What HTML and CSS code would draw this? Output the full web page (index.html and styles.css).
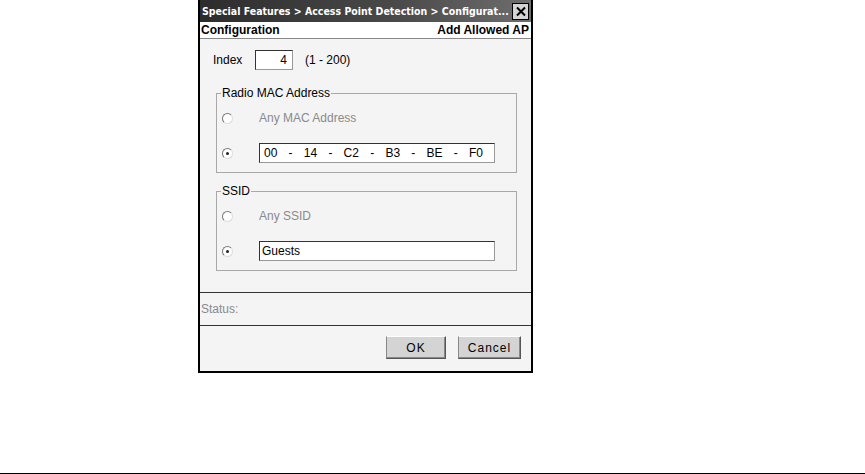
FILE: index.html
```html
<!DOCTYPE html>
<html lang="en">
<head>
  <meta charset="UTF-8" />
  <title>Add Allowed AP</title>
  <link rel="stylesheet" href="styles.css">
</head>
<body>

  <div class="dialog">
    <div class="title-bar">
      <span class="title-text">Special Features &gt; Access Point Detection &gt; Configurat...</span>
      <span class="close-btn">
        <svg width="12" height="11" viewBox="0 0 12 11"><path d="M2 1.5 L10 9.5 M10 1.5 L2 9.5" stroke="#000" stroke-width="2"/></svg>
      </span>
    </div>

    <div class="header-bar">
      <span>Configuration</span>
      <span>Add Allowed AP</span>
    </div>

    <div class="content">
      <div class="index-row">
        <label for="indexInput">Index</label>
        <div class="field small-field">4</div>
        <span>(1 - 200)</span>
      </div>

      <fieldset class="group mac-group">
        <legend>Radio MAC Address</legend>
        <div class="option-row">
          <span class="radio"></span>
          <span class="disabled-text">Any MAC Address</span>
        </div>
        <div class="option-row">
          <span class="radio checked"></span>
          <div class="field wide-field mac-field">
            <span>00</span><span>-</span><span>14</span><span>-</span><span>C2</span><span>-</span><span>B3</span><span>-</span><span>BE</span><span>-</span><span>F0</span>
          </div>
        </div>
      </fieldset>

      <fieldset class="group ssid-group">
        <legend>SSID</legend>
        <div class="option-row">
          <span class="radio"></span>
          <span class="disabled-text">Any SSID</span>
        </div>
        <div class="option-row">
          <span class="radio checked"></span>
          <div class="field wide-field">Guests</div>
        </div>
      </fieldset>
    </div>

    <div class="status-row">Status:</div>

    <div class="button-row">
      <button>OK</button>
      <button>Cancel</button>
    </div>
  </div>

  <div class="page-rule"></div>

</body>
</html>
```

FILE: styles.css
```css
body {
  margin: 0;
  background: #fff;
  font-family: "Liberation Sans", Arial, sans-serif;
  font-size: 12px;
  color: #000;
}

.dialog {
  width: 331px;
  height: 371px;
  margin-left: 198px;
  border: 2px solid #000;
  border-top: 0;
  background: #f4f4f4;
  display: flex;
  flex-direction: column;
}

.title-bar {
  height: 22px;
  background: linear-gradient(to right, #2c2c2c, #4a4a4a 60%, #6e6e6e);
  display: flex;
  align-items: center;
  padding: 0 2px 0 2px;
}
.title-text {
  flex: 1;
  min-width: 0;
  color: #fff;
  font-family: "DejaVu Sans Condensed", "DejaVu Sans", sans-serif;
  font-weight: bold;
  font-size: 10.5px;
  white-space: nowrap;
}
.close-btn {
  flex: none;
  width: 15px;
  height: 15px;
  background: #d4d4d4;
  border: 1px solid #000;
  display: flex;
  align-items: center;
  justify-content: center;
}

.header-bar {
  height: 16px;
  background: #fff;
  border-bottom: 1px solid #888;
  display: flex;
  justify-content: space-between;
  align-items: center;
  padding: 0 2px 0 1px;
  font-weight: bold;
}

.content {
  padding: 11px 0 0 13px;
  height: 242px;
}

.index-row {
  display: flex;
  align-items: center;
  height: 19px;
}
.index-row label {
  width: 42px;
}
.index-row span {
  margin-left: 12px;
}

.field {
  background: #fff;
  border: 1px solid #999;
  border-top-color: #333;
  border-left-color: #333;
  box-sizing: border-box;
  height: 20px;
  line-height: 18px;
  padding: 0 2px;
}
.small-field {
  width: 38px;
  text-align: right;
  padding-right: 5px;
}
.wide-field {
  width: 236px;
}
.mac-field {
  display: flex;
  justify-content: space-between;
  padding: 0 11px 0 4px;
}

.group {
  margin: 17px 0 0 3px;
  width: 301px;
  box-sizing: border-box;
  border: 1px solid #a8a8a8;
  padding: 0 0 0 5px;
  height: 87px;
}
.ssid-group {
  margin-top: 11px;
}
.group legend {
  padding: 0 1px;
  margin-left: -1px;
}

.option-row {
  display: flex;
  align-items: center;
  height: 20px;
  margin-top: 8px;
}
.option-row + .option-row {
  margin-top: 15px;
}

.radio {
  width: 9px;
  height: 9px;
  border: 1px solid #777;
  border-right-color: #ddd;
  border-bottom-color: #ddd;
  border-radius: 50%;
  background: #fff;
  margin-right: 26px;
  position: relative;
}
.radio.checked::after {
  content: "";
  position: absolute;
  left: 3px;
  top: 3px;
  width: 3px;
  height: 3px;
  border-radius: 50%;
  background: #222;
}

.disabled-text {
  color: #8a8a8a;
}

.status-row {
  border-top: 1px solid #333;
  border-bottom: 1px solid #333;
  height: 32px;
  line-height: 32px;
  color: #8a8a8a;
  padding-left: 1px;
}

.button-row {
  display: flex;
  justify-content: flex-end;
  gap: 12px;
  padding: 10px 10px 0 0;
}
.button-row button {
  font-family: "Liberation Sans", Arial, sans-serif;
  font-size: 12px;
  height: 23px;
  width: 60px;
  background: #d4d4d4;
  border: 1px solid #555;
  border-top-color: #fff;
  border-left-color: #888;
  box-shadow: inset -1px -1px 0 #888;
  letter-spacing: 1px;
  padding: 0;
}
.button-row button + button {
  width: 63px;
}

.page-rule {
  margin-top: 100px;
  height: 2px;
  background: #000;
}
```
